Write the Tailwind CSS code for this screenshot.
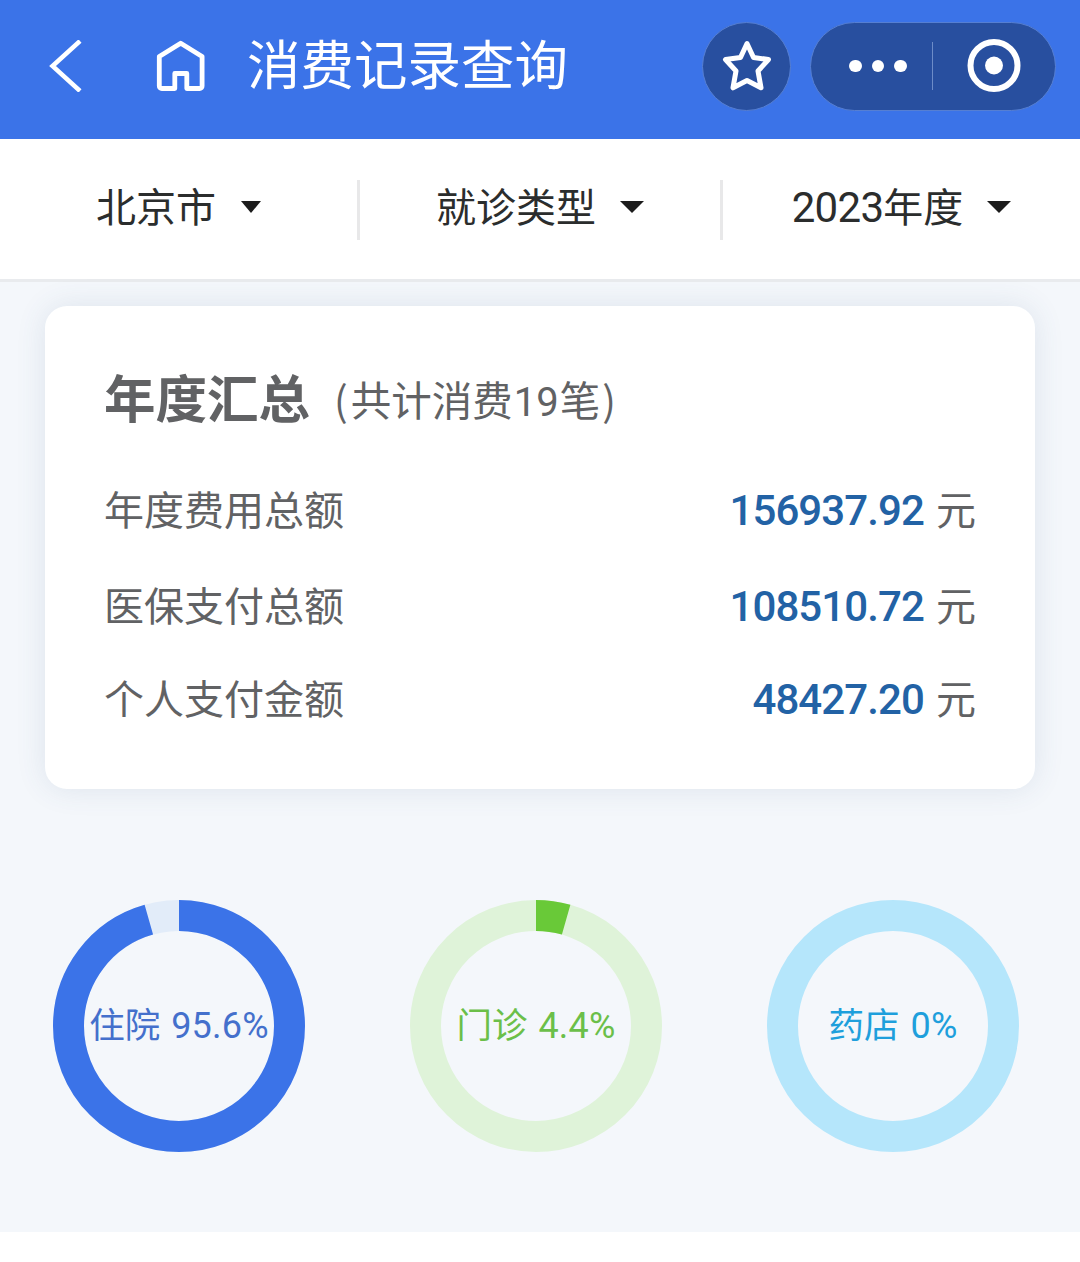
<!DOCTYPE html>
<html lang="zh-CN">
<head>
  <meta charset="UTF-8" />
  <meta name="viewport" content="width=device-width, initial-scale=1" />
  <title>消费记录查询</title>
  <script src="https://cdn.jsdelivr.net/npm/@tailwindcss/browser@4"></script>
  <style>
    body { font-family: 'Noto Sans CJK SC', sans-serif; }
    .num { font-family: Roboto, 'Noto Sans CJK SC', sans-serif; line-height: 0; }
  </style>
</head>
<body class="bg-white w-[1080px] h-[1262px] overflow-hidden">
  <!-- 顶部导航 -->
  <header class="flex items-center h-[139px] pl-[48px] pr-[24px] pb-[7px] bg-[#3b73e8] text-white">
    <svg class="w-[34px] h-[52px]" viewBox="0 0 34 52" fill="none" stroke="currentColor" stroke-width="4.500">
      <path d="M32 1L4.500 26l27.500 25" />
    </svg>
    <svg class="w-[50px] h-[52px] ml-[74px]" viewBox="0 0 50 52" fill="none" stroke="currentColor" stroke-width="4.800" stroke-linejoin="round">
      <path d="M24.700 3.200L3.300 16.500v29.500a2.500 2.500 0 0 0 2.500 2.500h13V33.500h12v15h12.800a2.500 2.500 0 0 0 2.500-2.500V16.500z" />
    </svg>
    <h1 class="ml-[41px] mb-[8px] text-[53.500px] leading-none whitespace-nowrap">消费记录查询</h1>
    <button class="flex items-center justify-center size-[89px] ml-auto rounded-full bg-[#284f9f] border border-[#567fd2]">
      <svg class="w-[50px] h-[52px]" viewBox="0 0 50 52" fill="none" stroke="currentColor" stroke-width="5" stroke-linejoin="round">
        <path d="M25 3.500L31.500 17.500L46.500 19.500L36 31L39 47.800L25 40.500L11 47.800L14 31L3.500 19.500L18.500 17.500Z" />
      </svg>
    </button>
    <div class="flex items-center w-[246px] h-[89px] ml-[19px] pl-[38px] pr-[34px] rounded-full bg-[#284f9f] border border-[#567fd2]">
      <div class="flex gap-[10px]">
        <span class="size-[12.500px] rounded-full bg-white"></span>
        <span class="size-[12.500px] rounded-full bg-white"></span>
        <span class="size-[12.500px] rounded-full bg-white"></span>
      </div>
      <div class="w-px h-[48px] ml-[25px] bg-[#6d8cc8]"></div>
      <svg class="size-[54px] ml-auto" viewBox="0 0 54 54">
        <circle cx="27" cy="26.500" r="23.500" fill="none" stroke="currentColor" stroke-width="6" />
        <circle cx="27" cy="26.500" r="9" fill="currentColor" />
      </svg>
    </div>
  </header>

  <!-- 筛选栏 -->
  <nav class="flex items-center h-[143px] pt-[2px] border-b-3 border-[#e9ebee] text-[40px] leading-none text-[#2b2d2d]">
    <div class="flex items-center justify-center gap-[25px] w-[357px] pb-[10px]">
      <span>北京市</span>
      <svg class="w-[20px] h-[12px] mt-[3px]" viewBox="0 0 20 12"><path d="M0 0h20L10 12z" fill="#1c1c1c" /></svg>
    </div>
    <div class="w-[3px] h-[60px] bg-[#e8e8e9]"></div>
    <div class="flex items-center justify-center gap-[24px] w-[360px] pb-[10px]">
      <span>就诊类型</span>
      <svg class="w-[24px] h-[12px] mt-[3px]" viewBox="0 0 24 12"><path d="M0 0h24L12 12z" fill="#1c1c1c" /></svg>
    </div>
    <div class="w-[3px] h-[60px] bg-[#e8e8e9]"></div>
    <div class="flex items-center justify-center gap-[24px] w-[357px] pb-[10px]">
      <span><span class="num text-[42px] tracking-[-0.7px]">2023</span>年度</span>
      <svg class="w-[24px] h-[12px] mt-[3px]" viewBox="0 0 24 12"><path d="M0 0h24L12 12z" fill="#1c1c1c" /></svg>
    </div>
  </nav>

  <main class="h-[950px] px-[45px] pt-[24px] bg-[#f4f7fb]">
    <!-- 年度汇总 -->
    <section class="h-[483px] pl-[59px] pr-[59px] pt-[64px] rounded-[22px] bg-white shadow-[0_0_30px_rgba(60,90,130,0.12)] text-[#616264]">
      <div class="flex items-center leading-none">
        <h2 class="text-[51.500px] font-bold">年度汇总</h2>
        <span class="ml-[24px] mt-[7px] text-[40.500px]">(<span class="ml-[3px]">共计消费</span><span class="num mx-[1px] text-[40px]">19</span><span class="mr-[2px]">笔</span>)</span>
      </div>
      <div class="flex justify-between mt-[66px] text-[40px] leading-none">
        <span>年度费用总额</span>
        <span><b class="num mr-[12px] text-[42px] tracking-[-0.9px] font-medium text-[#2262a5]">156937.92</b>元</span>
      </div>
      <div class="flex justify-between mt-[56px] text-[40px] leading-none">
        <span>医保支付总额</span>
        <span><b class="num mr-[12px] text-[42px] tracking-[-0.9px] font-medium text-[#2262a5]">108510.72</b>元</span>
      </div>
      <div class="flex justify-between mt-[53px] text-[40px] leading-none">
        <span>个人支付金额</span>
        <span><b class="num mr-[12px] text-[42px] tracking-[-0.9px] font-medium text-[#2262a5]">48427.20</b>元</span>
      </div>
    </section>

    <!-- 占比环图 -->
    <section class="flex justify-between mt-[111px] pl-[8px] pr-[16px] text-[35.500px] leading-none">
      <div class="grid place-items-center">
        <svg class="col-start-1 row-start-1 size-[252px] -rotate-90" viewBox="0 0 252 252" fill="none" stroke-width="31">
          <circle cx="126" cy="126" r="110.500" stroke="#e2ecf9" />
          <circle cx="126" cy="126" r="110.500" stroke="#3b73e8" pathLength="100" stroke-dasharray="95.6 100" />
        </svg>
        <span class="col-start-1 row-start-1 pb-[6px] whitespace-nowrap text-[#4470cc]">住院 <span class="num ml-[3px] text-[36px] tracking-[0.2px]">95.6%</span></span>
      </div>
      <div class="grid place-items-center">
        <svg class="col-start-1 row-start-1 size-[252px] -rotate-90" viewBox="0 0 252 252" fill="none" stroke-width="31">
          <circle cx="126" cy="126" r="110.500" stroke="#dff3d9" />
          <circle cx="126" cy="126" r="110.500" stroke="#69c938" pathLength="100" stroke-dasharray="4.4 100" />
        </svg>
        <span class="col-start-1 row-start-1 pb-[6px] whitespace-nowrap text-[#6bbf49]">门诊 <span class="num ml-[3px] text-[36px] tracking-[0.2px]">4.4%</span></span>
      </div>
      <div class="grid place-items-center">
        <svg class="col-start-1 row-start-1 size-[252px]" viewBox="0 0 252 252" fill="none" stroke-width="31">
          <circle cx="126" cy="126" r="110.500" stroke="#b5e6fb" />
        </svg>
        <span class="col-start-1 row-start-1 pb-[6px] whitespace-nowrap text-[#1e9fdc]">药店 <span class="num ml-[3px] text-[36px] tracking-[0.2px]">0%</span></span>
      </div>
    </section>
  </main>
</body>
</html>
